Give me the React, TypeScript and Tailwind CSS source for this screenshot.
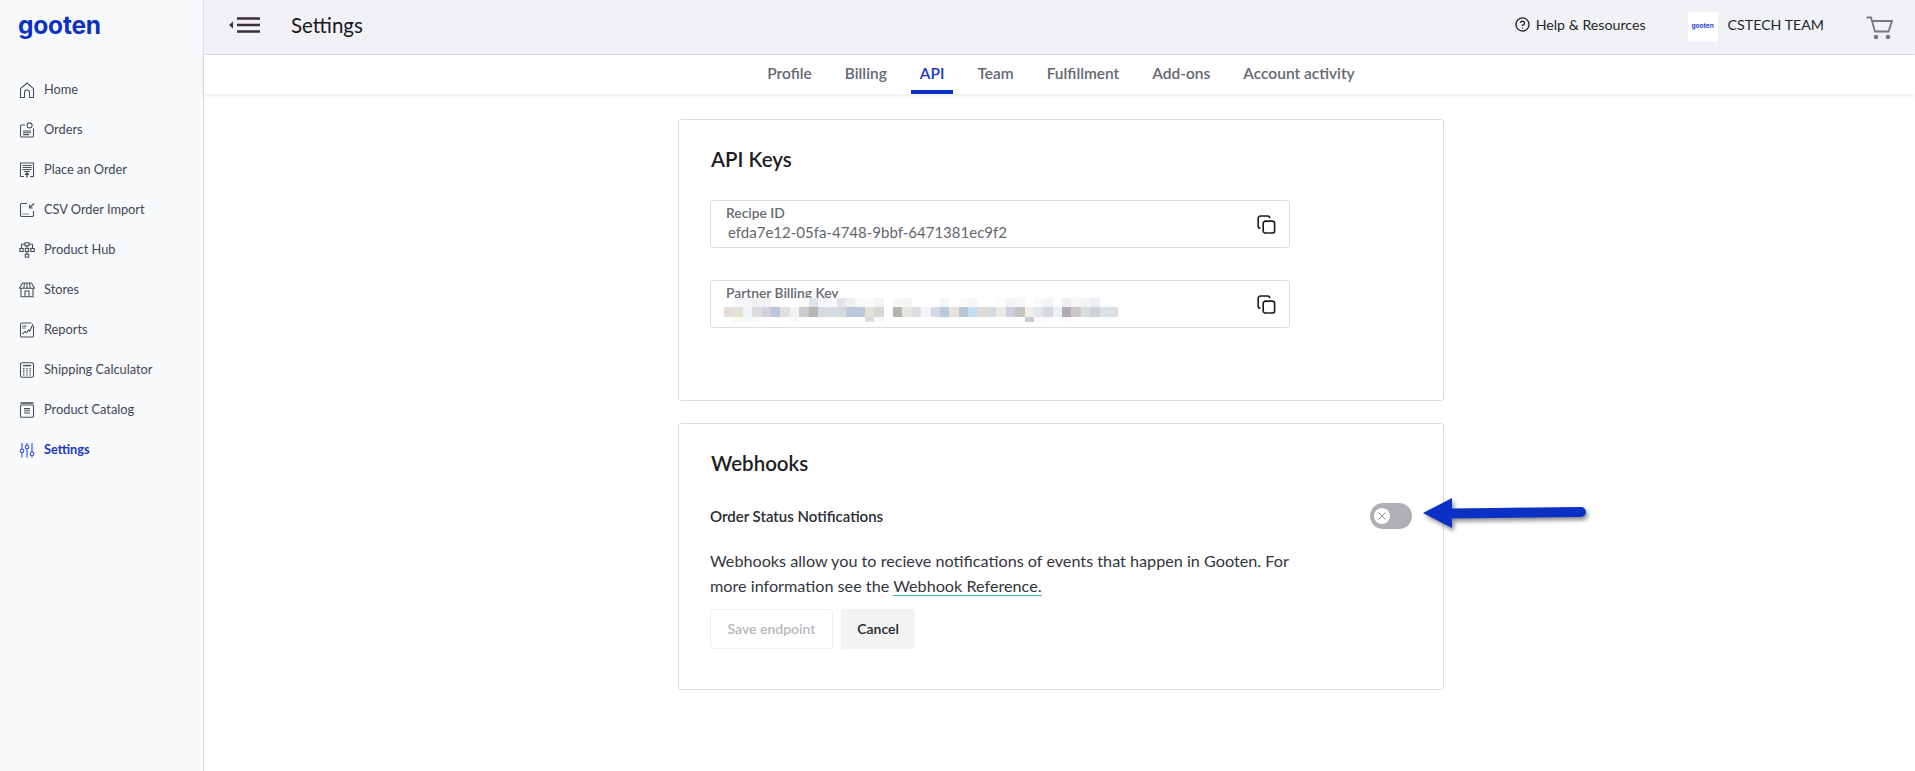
import type { ReactNode } from 'react';

function Glyph({ children, className = '' }: { children: ReactNode; className?: string }) {
  return (
    <svg
      viewBox="0 0 16 16"
      fill="none"
      stroke="currentColor"
      strokeWidth="1.1"
      className={`h-[16px] w-[16px] shrink-0 ${className}`}
    >
      {children}
    </svg>
  );
}

const navItems: { label: string; icon: ReactNode; active?: boolean }[] = [
  {
    label: 'Home',
    icon: <path d="M1.5 15.5V6.6L8 1l6.5 5.6v8.9h-4V10.5a2.5 2.5 0 0 0-5 0v5z" strokeLinejoin="round" />,
  },
  {
    label: 'Orders',
    icon: (
      <>
        <path d="M6 3H2.8a1.3 1.3 0 0 0-1.3 1.3v9.4A1.3 1.3 0 0 0 2.8 15h10.4a1.3 1.3 0 0 0 1.3-1.3V6.5" />
        <circle cx="10.6" cy="3.4" r="2.5" />
        <path d="M4 9h8M4 10.8h8M4 12.6h6" />
      </>
    ),
  },
  {
    label: 'Place an Order',
    icon: (
      <>
        <path d="M5 14.5H1.5V1h13v13.5H11" />
        <path d="M3.5 3.5h9M3.5 5.5h9M3.5 7.5h9M5 9.5h6" />
        <path d="M8 15.5v-4M6 12.8L8 11l2 1.8" strokeWidth="1.4" />
      </>
    ),
  },
  {
    label: 'CSV Order Import',
    icon: (
      <>
        <path d="M8 1.5H2.8a1.3 1.3 0 0 0-1.3 1.3v10.4a1.3 1.3 0 0 0 1.3 1.3h10.4a1.3 1.3 0 0 0 1.3-1.3V9" />
        <path d="M15 1.5L10.5 6M10.5 2.8V6h3.2" />
        <text x="3" y="12.6" fontSize="4.4" fill="currentColor" stroke="none" fontFamily="Liberation Sans">
          csv
        </text>
      </>
    ),
  },
  {
    label: 'Product Hub',
    icon: (
      <>
        <rect x="6" y="0.8" width="4" height="3" />
        <rect x="0.8" y="6.5" width="3.4" height="3" />
        <rect x="6.3" y="6.5" width="3.4" height="3" />
        <rect x="11.8" y="6.5" width="3.4" height="3" />
        <rect x="6.3" y="12.2" width="3.4" height="3" />
        <path d="M6 2.3H2.5v4.2M10 2.3h3.5v4.2M8 3.8v2.7M8 9.5v2.7" />
      </>
    ),
  },
  {
    label: 'Stores',
    icon: (
      <>
        <path d="M3.5 1h9L15.5 6.2H0.5z" strokeLinejoin="round" />
        <path d="M5.5 1L4.8 6.2M8 1v5.2M10.5 1l.7 5.2" />
        <path d="M2 6.5v8.3h12V6.5" />
        <path d="M6 14.8V9h4v5.8" />
      </>
    ),
  },
  {
    label: 'Reports',
    icon: (
      <>
        <path d="M12.5 1H2.8a1.3 1.3 0 0 0-1.3 1.3v11.4A1.3 1.3 0 0 0 2.8 15h10.4a1.3 1.3 0 0 0 1.3-1.3V4" />
        <path d="M3.5 4h4M3.5 6h3M3.5 12l2.5-2.6 1.6 1.4 2-2.8 1.2 1L14 2" />
      </>
    ),
  },
  {
    label: 'Shipping Calculator',
    icon: (
      <>
        <rect x="1.5" y="0.8" width="13" height="14.4" rx="1.5" />
        <path d="M4 3.6h8" strokeWidth="1.4" />
        <path
          d="M4 6.6h1.5M7.2 6.6h1.5M10.4 6.6h1.5M4 8.8h1.5M7.2 8.8h1.5M10.4 8.8h1.5M4 11h1.5M7.2 11h1.5M10.4 11h1.5M4 13h1.5M7.2 13h1.5M10.4 13h1.5"
          strokeWidth="1.2"
        />
      </>
    ),
  },
  {
    label: 'Product Catalog',
    icon: (
      <>
        <path d="M1.5 1h13" strokeWidth="1.6" />
        <rect x="1.5" y="3" width="13" height="12.2" rx="1" />
        <path d="M5 6.6h6M5 8.8h6M5 11h6" />
      </>
    ),
  },
  {
    label: 'Settings',
    active: true,
    icon: (
      <>
        <path d="M3 1v6.2M3 10.4v5M8 1v2.4M8 6.6v8.8M13 1v9.2M13 13.4v2" />
        <circle cx="3" cy="8.8" r="1.8" />
        <circle cx="8" cy="5" r="1.8" />
        <circle cx="13" cy="11.8" r="1.8" />
      </>
    ),
  },
];

const tabs = ['Profile', 'Billing', 'API', 'Team', 'Fulfillment', 'Add-ons', 'Account activity'];

// the blurred partner key in the picture, cell by cell
const mosaicTop: Record<number, string> = {
  1: '#f5f7f8', 2: '#f8f8fa', 3: '#f2f2f4', 4: '#f2f2f4', 5: '#fafafa', 8: '#fafaf6', 9: '#dde4ee',
  10: '#f4f5f8', 11: '#f8f8fa', 12: '#e4e5ec', 13: '#f0f0f3', 14: '#f8f9fa', 15: '#fbfbfb', 16: '#f2f4f6',
  18: '#f7f7f7', 19: '#f5f5f5', 23: '#f5f7f6', 25: '#fafaf8', 26: '#f5f7f7', 29: '#fbfbfb', 30: '#f2f2f3',
  31: '#f8f7f8', 33: '#f9fafb', 34: '#f3f5f5', 35: '#fbfcfc', 36: '#efeff1', 37: '#f7f7f7', 38: '#f5f4f2',
  39: '#eeeef5',
};
const mosaicMain = [
  '#e8dcd6', '#e2e3d6', '#eef5f8', '#dcdcdf', '#ced3de', '#b9c6dc', '#e3dfdc', '#f1f3f2', '#cbcbce',
  '#b9b5b4', '#d5dbe2', '#d5dce4', '#d3dbd9', '#b9c8dc', '#b9c8dc', '#e3e3d8', '#d6d8d6', '#ffffff',
  '#b9b2b2', '#e6e6e0', '#dedee3', '#f0f4f6', '#d3dbe9', '#b8c9da', '#e6e3de', '#bcc6d0', '#bfe0f0',
  '#dfdcd8', '#d5d9e2', '#eee9e2', '#cbcfdb', '#c5c3bf', '#f1efe8', '#e0e8ee', '#d8d8da', '#e6f0f5',
  '#aeaeb0', '#cdc8c5', '#d8dde0', '#d0d0d8', '#d5e3ef', '#e0e0e2',
];
const mosaicBottom: Record<number, string> = {
  1: '#f9f9ea', 2: '#f5f8fa', 3: '#fafafa', 7: '#f9f9f9', 15: '#dcdcde', 16: '#f8f8f8', 32: '#c5ccd2',
  33: '#fbfbfb', 34: '#fbfbfb', 36: '#fbfbfb',
};

function Mosaic() {
  return (
    <div className="relative ml-[-2px] flex w-[395px] flex-col bg-white">
      <div className="flex h-[9px]">
        {mosaicMain.map((_, i) => (
          <div key={i} className="h-full w-[9.4px]" style={{ background: mosaicTop[i] ?? '#ffffff' }} />
        ))}
      </div>
      <div className="flex h-[10px]">
        {mosaicMain.map((color, i) => (
          <div key={i} className="h-full w-[9.4px]" style={{ background: color }} />
        ))}
      </div>
      <div className="flex h-[5px]">
        {mosaicMain.map((_, i) => (
          <div key={i} className="h-full w-[9.4px]" style={{ background: mosaicBottom[i] ?? '#ffffff' }} />
        ))}
      </div>
    </div>
  );
}

function CopyIcon() {
  return (
    <svg viewBox="0 0 20 20" fill="none" stroke="#1c1c20" strokeWidth="1.7" className="h-[19px] w-[19px]">
      <rect x="6.5" y="6.5" width="12" height="12.5" rx="2.5" />
      <path d="M3.5 14A2.5 2.5 0 0 1 1.2 11.5V3.7A2.6 2.6 0 0 1 3.8 1.1h7.4A2.5 2.5 0 0 1 13.5 3.4" />
    </svg>
  );
}

function KeyField({ label, children }: { label: string; children: ReactNode }) {
  return (
    <div className="flex h-[48px] w-[580px] items-start justify-between overflow-hidden rounded-[3px] border border-[#dcdde0] pl-[15px] pr-[13px]">
      <div className="flex flex-col pt-[2px]">
        <div className="h-[19px] text-[13.8px] font-semibold leading-[19px] text-[#666a72]">{label}</div>
        {children}
      </div>
      <div className="pt-[14px]">
        <CopyIcon />
      </div>
    </div>
  );
}

export default function App() {
  return (
    <div className="relative flex h-[771px] w-full overflow-hidden bg-white font-['Lato',sans-serif] text-[#23252b]">
      <aside className="w-[204px] shrink-0 border-r border-[#dcdde0] bg-[#f9fafc]">
        <div className="h-[70px] pl-[18px] pt-[9px] font-['Inter',sans-serif] text-[24.5px] font-bold leading-[32px] tracking-[-0.2px] text-[#0b30c4]">
          gooten
        </div>
        <nav className="flex flex-col">
          {navItems.map(({ label, icon, active }) => (
            <div
              key={label}
              className={`flex h-[40px] items-center gap-[9px] pl-[19px] text-[12.8px] ${
                active ? 'font-bold text-[#1a37c9]' : 'text-[#3f4654]'
              }`}
            >
              <Glyph className={active ? 'text-[#2f4fd6]' : 'text-[#4a4f5c]'}>{icon}</Glyph>
              {label}
            </div>
          ))}
        </nav>
      </aside>

      <div className="flex min-w-0 flex-1 flex-col">
        <header className="flex h-[55px] shrink-0 items-center border-b border-[#dcdde0] bg-[#f1f2f6] pb-[4px] pl-[25px] pr-[22px]">
          <svg viewBox="0 0 31 16" className="h-[16px] w-[31px]">
            <path d="M0 8l4-3.5v7z" fill="#3d2f3a" />
            <path d="M8 1.5h23M8 8h23M8 14.5h23" stroke="#3d2f3a" strokeWidth="2.6" />
          </svg>
          <div className="ml-[31px] text-[20.5px] leading-none text-[#16181d]">Settings</div>
          <div className="ml-auto flex items-center gap-[6px] text-[14.2px] text-[#23252b]">
            <svg viewBox="0 0 16 16" fill="none" stroke="#1c1c20" strokeWidth="1.4" className="h-[15px] w-[15px]">
              <circle cx="8" cy="8" r="7" />
              <path d="M5.9 6.2A2.1 2.1 0 1 1 8 8.6v1" />
              <circle cx="8" cy="11.8" r="0.7" fill="#1c1c20" stroke="none" />
            </svg>
            Help &amp; Resources
          </div>
          <div className="ml-[42px] mt-[4px] flex h-[30px] w-[30px] items-center justify-center bg-white font-['Inter',sans-serif] text-[6.5px] font-bold text-[#2c46cf]">
            gooten
          </div>
          <div className="ml-[10px] text-[14.2px] text-[#23252b]">CSTECH TEAM</div>
          <svg
            viewBox="0 0 27 24"
            fill="none"
            stroke="#7a7680"
            strokeWidth="1.8"
            className="ml-[42px] mt-[5px] h-[24px] w-[27px]"
          >
            <path d="M0.5 1.5h4.5l4 14h13.5l3.5-10.5H6.2" />
            <circle cx="10" cy="21" r="2.3" fill="#7a7680" stroke="none" />
            <circle cx="22" cy="21" r="2.3" fill="#7a7680" stroke="none" />
          </svg>
        </header>

        <div className="flex h-[39px] shrink-0 items-end justify-center gap-[15px] pl-[3px] shadow-[0_2px_5px_rgba(0,0,0,0.08)]">
          {tabs.map((tab) => (
            <div
              key={tab}
              className={`flex h-[39px] items-center border-b-[4px] px-[9px] pt-[3px] text-[15.5px] font-semibold ${
                tab === 'API' ? 'border-[#0b30c4] text-[#1a37c9]' : 'border-transparent text-[#646871]'
              }`}
            >
              {tab}
            </div>
          ))}
        </div>

        <main className="ml-[474px] flex w-[766px] flex-col gap-[22px] pt-[25px]">
          <section className="flex h-[282px] flex-col rounded-[3px] border border-[#dcdde0] pl-[31px]">
            <h2 className="pl-[1px] pt-[26px] text-[20.5px] font-semibold leading-[26px] text-[#1c1e24]">API Keys</h2>
            <div className="mt-[28px]">
              <KeyField label="Recipe ID">
                <div className="pl-[2px] pt-[1px] text-[15px] leading-[19px] text-[#63666e]">
                  efda7e12-05fa-4748-9bbf-6471381ec9f2
                </div>
              </KeyField>
            </div>
            <div className="mt-[32px]">
              <KeyField label="Partner Billing Key">
                <div className="mt-[-4px]">
                  <Mosaic />
                </div>
              </KeyField>
            </div>
          </section>

          <section className="flex h-[267px] flex-col rounded-[3px] border border-[#dcdde0] pl-[31px]">
            <h2 className="pl-[1px] pt-[26px] text-[20.5px] font-semibold leading-[26px] text-[#1c1e24]">Webhooks</h2>
            <div className="mt-[27px] flex h-[26px] w-[702px] items-center justify-between">
              <div className="text-[15px] font-semibold text-[#2a2c33]">Order Status Notifications</div>
              <div className="flex h-[26px] w-[42px] items-center rounded-full bg-[#aeb0b5] pl-[4px]">
                <div className="flex h-[16px] w-[16px] items-center justify-center rounded-full bg-white">
                  <svg viewBox="0 0 10 10" stroke="#8b8d92" strokeWidth="1" className="h-[10px] w-[10px]">
                    <path d="M1.5 1.5l7 7M8.5 1.5l-7 7" />
                  </svg>
                </div>
              </div>
            </div>
            <p className="mt-[19px] w-[590px] text-[16.2px] leading-[25px] text-[#33353c]">
              Webhooks allow you to recieve notifications of events that happen in Gooten. For more information see the{' '}
              <span className="border-b border-[#4fb89e]">Webhook Reference.</span>
            </p>
            <div className="mt-[11px] flex gap-[8px]">
              <div className="flex h-[40px] w-[123px] items-center justify-center rounded-[3px] border border-[#eeeeef] pb-[1px] text-[14px] font-semibold text-[#b5b7bb]">
                Save endpoint
              </div>
              <div className="flex h-[40px] w-[74px] items-center justify-center rounded-[3px] bg-[#f3f3f3] pb-[1px] text-[14px] font-semibold text-[#23252b]">
                Cancel
              </div>
            </div>
          </section>
        </main>
      </div>

      <svg
        viewBox="0 0 165 32"
        className="absolute left-[1423px] top-[498px] h-[32px] w-[165px] drop-shadow-[2px_3px_2px_rgba(0,0,0,0.45)]"
      >
        <path d="M0 15L29 0v10.5L158 9a5 5 0 0 1 0 10L29 20.5V30z" fill="#0b30c4" />
      </svg>
    </div>
  );
}
